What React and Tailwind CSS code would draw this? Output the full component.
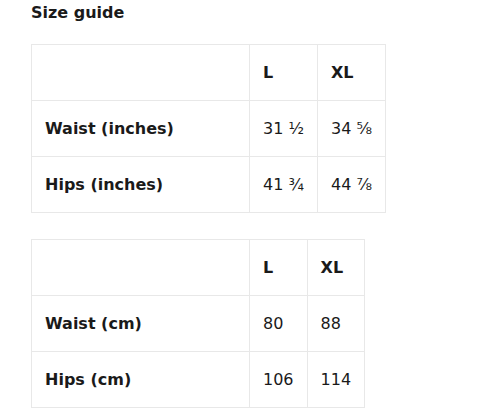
export default function App() {
  const font = { fontFamily: '"DejaVu Sans", sans-serif' };
  const Table = ({ rows }) => (
    <table className="border-collapse text-[16px] text-[#1a1a1a]">
      <tbody>
        {rows.map((r, i) => (
          <tr key={i}>
            {r.map((c, j) => (
              <td
                key={j}
                className={`border border-[#e8e8e8] h-[56px] px-[13px] align-middle ${j === 0 ? 'w-[218px] font-bold' : ''} ${i === 0 ? 'font-bold' : ''}`}
              >
                {c}
              </td>
            ))}
          </tr>
        ))}
      </tbody>
    </table>
  );
  return (
    <div className="bg-white w-[480px] h-[420px] pl-[31px] pt-[2px]" style={font}>
      <h1 className="text-[16px] font-bold text-[#1a1a1a] leading-[22px] mb-[20px]">Size guide</h1>
      <Table
        rows={[
          ['', 'L', 'XL'],
          ['Waist (inches)', '31 ½', '34 ⅝'],
          ['Hips (inches)', '41 ¾', '44 ⅞'],
        ]}
      />
      <div className="h-[26px]" />
      <Table
        rows={[
          ['', 'L', 'XL'],
          ['Waist (cm)', '80', '88'],
          ['Hips (cm)', '106', '114'],
        ]}
      />
    </div>
  );
}
